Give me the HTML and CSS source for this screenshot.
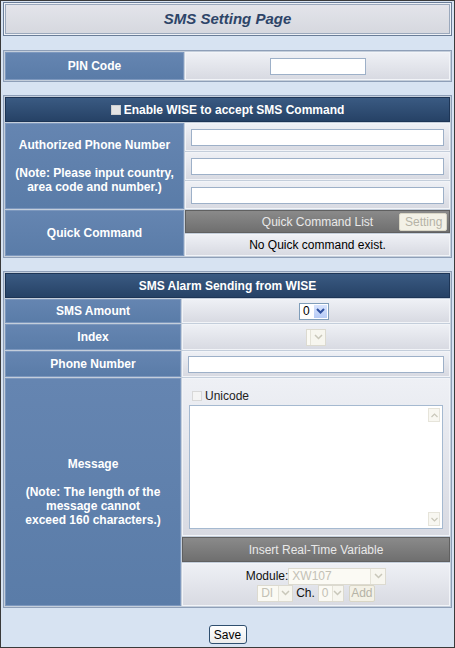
FILE: index.html
```html
<!DOCTYPE html>
<html lang="en">

<head>
    <meta charset="UTF-8">
    <meta name="viewport" content="width=device-width, initial-scale=1.0">
    <title>SMS Setting Page</title>
    <link rel="stylesheet" href="styles.css">
</head>

<body>
    <div class="page">
        <div class="page-title">
            <h1>SMS Setting Page</h1>
        </div>

        <!-- PIN code -->
        <table class="setting-table">
            <colgroup>
                <col class="col-label">
                <col>
            </colgroup>
            <tr class="row-pin">
                <td class="label-cell">PIN Code</td>
                <td class="value-cell center"><input type="text" class="text-input pin-input"></td>
            </tr>
        </table>

        <!-- SMS command -->
        <table class="setting-table">
            <colgroup>
                <col class="col-label">
                <col>
            </colgroup>
            <tr>
                <th colspan="2" class="section-head">
                    <span class="check check-head"></span>Enable WISE to accept SMS Command
                </th>
            </tr>
            <tr class="row-phone">
                <td rowspan="3" class="label-cell">
                    Authorized Phone Number<br><br>(Note: Please input country,<br>area code and number.)
                </td>
                <td class="value-cell"><input type="text" class="text-input wide"></td>
            </tr>
            <tr class="row-phone">
                <td class="value-cell"><input type="text" class="text-input wide"></td>
            </tr>
            <tr class="row-phone">
                <td class="value-cell"><input type="text" class="text-input wide"></td>
            </tr>
            <tr class="row-bar">
                <td rowspan="2" class="label-cell">Quick Command</td>
                <td class="bar-cell">
                    <div class="bar-inner">
                        <span class="bar-title">Quick Command List</span>
                        <button class="btn btn-disabled btn-setting">Setting</button>
                    </div>
                </td>
            </tr>
            <tr class="row-empty">
                <td class="value-cell center">No Quick command exist.</td>
            </tr>
        </table>

        <!-- SMS alarm -->
        <table class="setting-table alarm-table">
            <colgroup>
                <col class="col-label">
                <col>
            </colgroup>
            <tr>
                <th colspan="2" class="section-head">SMS Alarm Sending from WISE</th>
            </tr>
            <tr class="row-std row-amount">
                <td class="label-cell">SMS Amount</td>
                <td class="value-cell center">
                    <span class="select select-amount">
                        <span class="select-value">0</span>
                        <span class="select-arrow">
                            <svg width="9" height="6" viewBox="0 0 9 6"><path d="M1 1l3.5 3.5L8 1" fill="none" stroke="#2d4f9e" stroke-width="2"/></svg>
                        </span>
                    </span>
                </td>
            </tr>
            <tr class="row-std">
                <td class="label-cell">Index</td>
                <td class="value-cell center">
                    <span class="select select-off select-index">
                        <span class="select-value"></span>
                        <span class="select-arrow">
                            <svg width="9" height="6" viewBox="0 0 9 6"><path d="M1 1l3.5 3.5L8 1" fill="none" stroke="#c9c7ba" stroke-width="1.5"/></svg>
                        </span>
                    </span>
                </td>
            </tr>
            <tr class="row-std">
                <td class="label-cell">Phone Number</td>
                <td class="value-cell"><input type="text" class="text-input wide"></td>
            </tr>
            <tr class="row-message">
                <td rowspan="3" class="label-cell">
                    Message<br><br>(Note: The length of the<br>message cannot<br>exceed 160 characters.)
                </td>
                <td class="value-cell message-cell">
                    <label class="unicode"><span class="check"></span>Unicode</label>
                    <div class="textarea">
                        <div class="scroll">
                            <span class="scroll-btn">
                                <svg width="7" height="5" viewBox="0 0 7 5"><path d="M0.5 4l3-3 3 3" fill="none" stroke="#c9c7ba" stroke-width="1.2"/></svg>
                            </span>
                            <span class="scroll-btn">
                                <svg width="7" height="5" viewBox="0 0 7 5"><path d="M0.5 1l3 3 3-3" fill="none" stroke="#c9c7ba" stroke-width="1.2"/></svg>
                            </span>
                        </div>
                    </div>
                </td>
            </tr>
            <tr class="row-bar">
                <td class="bar-cell"><div class="bar-inner"><span class="bar-title">Insert Real-Time Variable</span></div></td>
            </tr>
            <tr class="row-variable">
                <td class="value-cell center">
                    <div class="var-line">
                        <span class="var-label">Module:</span>
                        <span class="select select-off select-module">
                            <span class="select-value">XW107</span>
                            <span class="select-arrow">
                                <svg width="9" height="6" viewBox="0 0 9 6"><path d="M1 1l3.5 3.5L8 1" fill="none" stroke="#c9c7ba" stroke-width="1.5"/></svg>
                            </span>
                        </span>
                    </div>
                    <div class="var-line">
                        <span class="select select-off select-type">
                            <span class="select-value">DI</span>
                            <span class="select-arrow">
                                <svg width="9" height="6" viewBox="0 0 9 6"><path d="M1 1l3.5 3.5L8 1" fill="none" stroke="#c9c7ba" stroke-width="1.5"/></svg>
                            </span>
                        </span>
                        <span class="var-label">Ch.</span>
                        <span class="select select-off select-ch">
                            <span class="select-value">0</span>
                            <span class="select-arrow">
                                <svg width="9" height="6" viewBox="0 0 9 6"><path d="M1 1l3.5 3.5L8 1" fill="none" stroke="#c9c7ba" stroke-width="1.5"/></svg>
                            </span>
                        </span>
                        <button class="btn btn-disabled btn-add">Add</button>
                    </div>
                </td>
            </tr>
        </table>

        <div class="actions">
            <button class="btn btn-save">Save</button>
        </div>
    </div>
</body>

</html>
```

FILE: styles.css
```css
:root {
    --page-bg: #d7e3f2;
    --frame-color: #3a3a3a;
    --font-family: 'Liberation Sans', Arial, sans-serif;
}

* {
    box-sizing: border-box;
    margin: 0;
    padding: 0;
}

body {
    font-family: var(--font-family);
    font-size: 12px;
    background-color: var(--page-bg);
    color: #000;
}

.page {
    height: 648px;
    border: 1px solid var(--frame-color);
    padding: 1px 2px 0;
}

.page-title {
    height: 34px;
    border: 1px solid #6a7d98;
    padding: 1px;
    background-color: #eef1f6;
}

.page-title h1 {
    height: 100%;
    border: 1px solid #9aa8bc;
    background: linear-gradient(#e3e4ea, #d6d8df);
    font-size: 15px;
    font-weight: 700;
    font-style: italic;
    color: #2d4468;
    text-align: center;
    line-height: 28px;
}

/* Tables */
.setting-table {
    width: 100%;
    margin-top: 14px;
    border: 1px solid #8e9fb8;
    border-spacing: 1px;
    background-color: #c4cedb;
    table-layout: fixed;
}

.setting-table + .setting-table {
    margin-top: 13px;
}

.col-label {
    width: 179px;
}

.alarm-table .col-label {
    width: 176px;
}

.label-cell {
    background: linear-gradient(#6585b1, #5a7ca8);
    border: 1px solid #7d98be;
    color: #fff;
    font-weight: 700;
    text-align: center;
    vertical-align: middle;
    padding: 0 2px;
    line-height: 14px;
}

.value-cell {
    background: linear-gradient(#eef0f5, #d8dae2);
    border: 1px solid #f2f4f8;
    vertical-align: middle;
    padding: 0 5px;
}

.center {
    text-align: center;
}

.section-head {
    height: 25px;
    background: linear-gradient(#3a5a82, #264266);
    border: 1px solid #1d3556;
    color: #fff;
    font-weight: 700;
    font-size: 12px;
}

.row-pin td {
    height: 28px;
}

.row-phone td.value-cell {
    height: 28px;
}

.row-bar td {
    height: 23px;
}

.row-empty td {
    height: 22px;
}

.row-std td {
    height: 26px;
}

.row-amount td {
    height: 24px;
}

.row-message td.value-cell {
    height: 157px;
}

.alarm-table .row-bar td {
    height: 25px;
}

.row-variable td {
    height: 43px;
}

/* Inputs */
.text-input {
    height: 17px;
    border: 1px solid #9db0c8;
    background-color: #fff;
    font: inherit;
    outline: none;
}

.pin-input {
    width: 96px;
}

.wide {
    width: 100%;
    display: block;
}

.check {
    display: inline-block;
    width: 10px;
    height: 10px;
    border: 1px solid #d8d8d8;
    background-color: #f4f4f4;
    vertical-align: -1px;
    margin-right: 3px;
}

.check-head {
    background-color: #e4e4e4;
    border-color: #cfcfcf;
}

/* Dark bars */
.bar-cell {
    background: linear-gradient(#8a8a8a, #6f6f6f);
    border: 1px solid #606060;
    padding: 0 2px;
}

.bar-inner {
    display: grid;
    grid-template-columns: 1fr auto 1fr;
    align-items: center;
    height: 100%;
}

.bar-title {
    grid-column: 2;
    color: #e9e9e9;
    font-size: 12px;
}

.btn {
    font: inherit;
    font-size: 12px;
    cursor: pointer;
}

.btn-disabled {
    background-color: #f3f1e6;
    border: 1px solid #d8d5c5;
    color: #b5b3a7;
    border-radius: 2px;
    padding: 0 5px;
    height: 17px;
}

.btn-setting {
    grid-column: 3;
    justify-self: end;
    width: 48px;
    height: 18px;
}

/* Fake selects */
.select {
    display: inline-flex;
    align-items: stretch;
    height: 17px;
    border: 1px solid #7f9db9;
    background-color: #fff;
    vertical-align: middle;
    text-align: left;
}

.select-value {
    flex: 1;
    padding: 0 3px;
    line-height: 15px;
}

.select-arrow {
    width: 15px;
    display: flex;
    align-items: center;
    justify-content: center;
    background: linear-gradient(#d7e3fd, #b7cbf5);
    border: 1px solid #fff;
}

.select-amount {
    width: 30px;
    margin-left: -4px;
}

.select-off {
    border-color: #dcdad0;
    background-color: #fbfaf4;
    color: #c3c1b6;
}

.select-off .select-arrow {
    background: #f7f6ef;
    border: none;
    border-left: 1px solid #e5e3d8;
}

.select-index {
    width: 20px;
}

.select-index .select-value {
    padding: 0;
}

.select-module {
    width: 98px;
}

.select-type {
    width: 36px;
}

.select-ch {
    width: 26px;
}

.select-ch .select-arrow,
.select-type .select-arrow {
    width: 14px;
}

/* Message */
.message-cell {
    vertical-align: top;
    padding: 7px 6px 6px;
}

.unicode {
    display: block;
    font-size: 12px;
    color: #222;
    height: 19px;
    line-height: 20px;
    padding-left: 3px;
}

.textarea {
    height: 124px;
    border: 1px solid #a5b9d0;
    background-color: #fff;
    display: flex;
    justify-content: flex-end;
    padding: 2px;
}

.scroll {
    width: 12px;
    display: flex;
    flex-direction: column;
    justify-content: space-between;
}

.scroll-btn {
    height: 14px;
    background-color: #f8f7f1;
    border: 1px solid #e6e4da;
    display: flex;
    align-items: center;
    justify-content: center;
}

.var-line {
    display: flex;
    justify-content: center;
    align-items: center;
    gap: 3px;
    height: 17px;
}

.var-label {
    color: #111;
    font-size: 12px;
}

.var-line .var-label:first-child {
    margin-right: -3px;
}

.btn-add {
    width: 26px;
    padding: 0;
    margin-left: 2px;
}

/* Save */
.actions {
    text-align: center;
    margin-top: 17px;
}

.btn-save {
    width: 38px;
    height: 19px;
    background: linear-gradient(#ffffff, #ececec);
    border: 1px solid #2f4f6f;
    border-radius: 3px;
    color: #000;
    padding: 0;
}
```
